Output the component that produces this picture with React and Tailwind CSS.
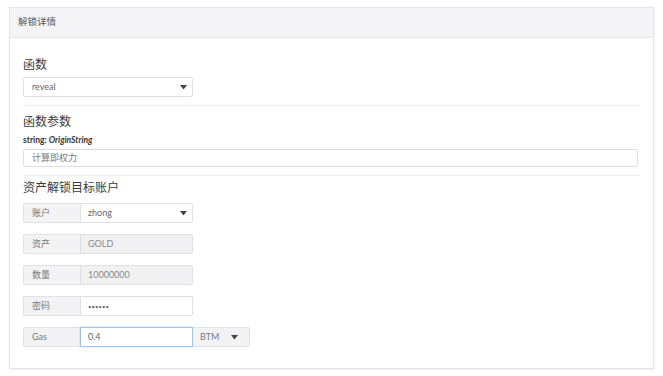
import React from "react";

const font = { fontFamily: '"Lato", "Open Sans", "Noto Sans CJK SC", sans-serif' };

function Caret() {
  return (
    <svg width="7" height="5" viewBox="0 0 7 5" className="shrink-0">
      <path d="M0 0 H7 L3.5 4.5 Z" fill="#444" />
    </svg>
  );
}

function Row({ label, children, mt = "mt-[11px]" }) {
  return (
    <div className={`flex ${mt} h-[20px]`}>
      <div className="w-[57px] h-full flex items-center pl-[8px] bg-[#f3f3f5] border border-[#e2e2e6] border-r-0 rounded-l-[2px] text-[9px] text-[#777]">
        {label}
      </div>
      {children}
    </div>
  );
}

export default function App() {
  return (
    <div className="w-[663px] h-[376px] bg-white pt-[7px] pl-[9px]" style={font}>
      <div className="w-[645px] h-[362px] border border-[#e6e6ea] shadow-[1px_1px_2px_rgba(0,0,0,0.06)]">
        <div className="h-[30px] bg-[#f4f4f6] border-b border-[#e3e3e8] flex items-center pl-[8px] text-[9.5px] text-[#555]">
          解锁详情
        </div>
        <div className="pl-[13px] pr-[13px] pt-[19px]">
          <div className="text-[12px] leading-[16px] text-[#3a3a3a]">函数</div>
          <div className="mt-[4px] w-[170px] h-[20px] border border-[#e0e0e4] rounded-[2px] flex items-center justify-between pl-[8px] pr-[5px] text-[9px] text-[#666]">
            <span>reveal</span>
            <Caret />
          </div>
          <div className="mt-[8px] border-t border-[#eeeef1]" />
          <div className="mt-[8px] text-[12px] leading-[16px] text-[#3a3a3a]">函数参数</div>
          <div className="mt-[4px] text-[8.5px] leading-[12px] font-bold text-[#333]">
            string: <span className="italic">OriginString</span>
          </div>
          <div className="mt-[3px] w-[615px] h-[18px] border border-[#dedee2] rounded-[2px] flex items-center pl-[8px] text-[9px] text-[#777]">
            计算即权力
          </div>
          <div className="mt-[8px] border-t border-[#eeeef1]" />
          <div className="mt-[4px] text-[12px] leading-[16px] text-[#3a3a3a]">资产解锁目标账户</div>
          <Row label="账户" mt="mt-[7px]">
            <div className="w-[113px] h-full border border-[#e0e0e4] rounded-r-[2px] flex items-center justify-between pl-[7px] pr-[5px] text-[9px] text-[#666]">
              <span>zhong</span>
              <Caret />
            </div>
          </Row>
          <Row label="资产">
            <div className="w-[113px] h-full border border-[#e0e0e4] bg-[#f1f1f3] rounded-r-[2px] flex items-center pl-[7px] text-[9px] text-[#888]">
              GOLD
            </div>
          </Row>
          <Row label="数量">
            <div className="w-[113px] h-full border border-[#e0e0e4] bg-[#f1f1f3] rounded-r-[2px] flex items-center pl-[7px] text-[9px] text-[#888]">
              10000000
            </div>
          </Row>
          <Row label="密码">
            <div className="w-[113px] h-full border border-[#e0e0e4] rounded-r-[2px] flex items-center pl-[7px] text-[6px] text-[#666] tracking-[0px]">
              ••••••
            </div>
          </Row>
          <Row label="Gas">
            <div className="w-[113px] h-full border border-[#9cc5ee] flex items-center pl-[7px] text-[9px] text-[#666] shadow-[0_0_2px_rgba(102,175,233,0.4)]">
              0.4
            </div>
            <div className="w-[57px] h-full bg-[#f3f3f5] border border-[#e2e2e6] border-l-0 rounded-r-[2px] flex items-center pl-[7px] gap-[12px] text-[9px] text-[#777]">
              <span>BTM</span>
              <Caret />
            </div>
          </Row>
        </div>
      </div>
    </div>
  );
}
